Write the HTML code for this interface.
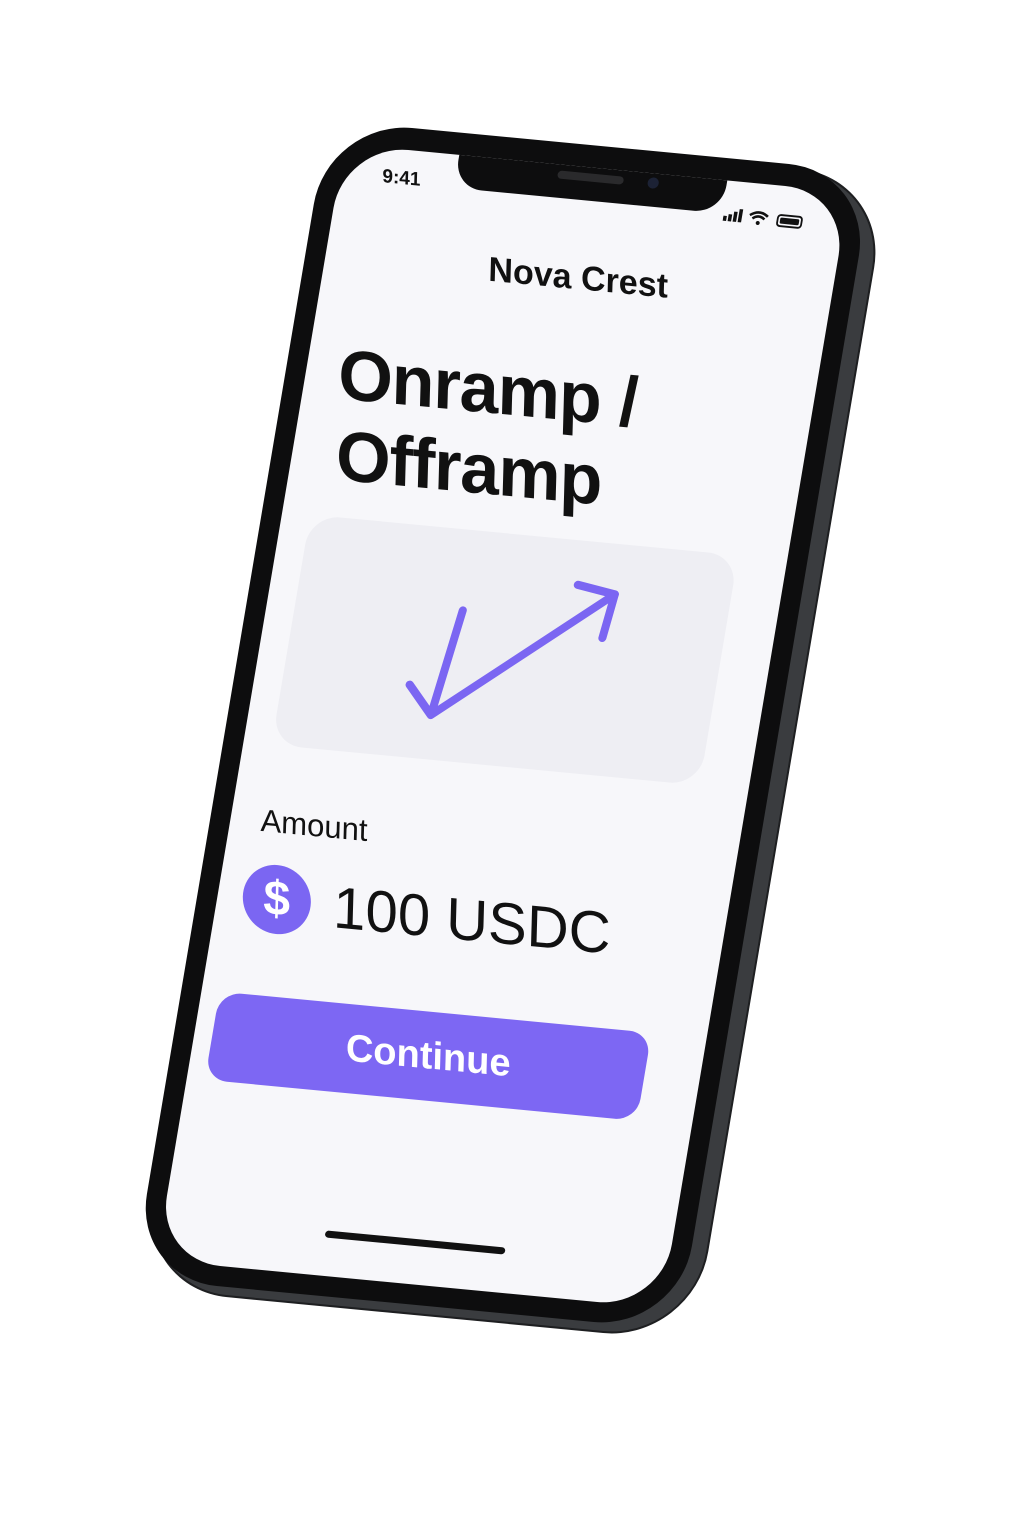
<!DOCTYPE html>
<html><head><meta charset="utf-8"><style>
html,body{margin:0;padding:0;background:#fff;width:1024px;height:1536px;overflow:hidden}
body{font-family:"Liberation Sans",sans-serif}
.ph{position:absolute;left:328px;top:120px;width:565px;height:1175px;transform-origin:0 0;transform:matrix(1,0.0954,-0.1686,1,0,0)}
.side{position:absolute;left:8px;top:6px;width:552px;height:1160px;border-radius:88px;background:#3a3c3f;box-shadow:0 0 0 2px #1e1f21}
.body{position:absolute;left:0;top:0;width:545px;height:1158px;border-radius:84px;background:#0d0d0e}
.scr{position:absolute;left:20px;top:22px;width:505px;height:1116px;border-radius:64px;background:#f7f7fa;overflow:hidden}
.notch{position:absolute;left:115px;top:-2px;width:268px;height:35px;background:#0d0d0e;border-radius:0 0 28px 28px}
.a{position:absolute;color:#111}
.u{transform:skewX(8deg)}
</style></head><body>
<div class="ph">
 <div class="side"></div>
 <div class="body">
  <div class="scr">
   <div class="notch"><div style="position:absolute;left:100px;top:8px;width:66px;height:8px;border-radius:4px;background:#2a2a2c"></div><div style="position:absolute;left:190px;top:6px;width:11px;height:11px;border-radius:50%;background:#1c2235"></div></div>
   <div class="a u" style="left:43px;top:18px;font-size:19px;font-weight:bold">9:41</div>
   <svg class="a" style="left:385px;top:24px" width="90" height="22" viewBox="0 0 90 22">
    <rect x="0" y="11" width="3.5" height="5" fill="#111"/><rect x="5" y="9" width="3.5" height="7" fill="#111"/><rect x="10" y="6" width="3.5" height="10" fill="#111"/><rect x="15" y="3" width="3.5" height="13" fill="#111"/>
    <path d="M26 8 Q35 1 44 8 M29 11 Q35 6 41 11" stroke="#111" stroke-width="2.5" fill="none"/><circle cx="35" cy="15" r="2" fill="#111"/>
    <rect x="54" y="5" width="24" height="11" rx="3" fill="none" stroke="#111" stroke-width="1.8"/><rect x="56.5" y="7.5" width="19" height="6" rx="1.5" fill="#111"/>
   </svg>
   <div class="a u" style="left:0;width:505px;text-align:center;top:90px;font-size:34px;font-weight:bold;line-height:40px">Nova Crest</div>
   <div class="a u" style="left:38px;top:187px;font-size:70px;font-weight:bold;line-height:80px;letter-spacing:-1px">Onramp /<br>Offramp</div>
   <div style="position:absolute;left:28px;top:368px;width:428px;height:230px;border-radius:30px;background:#eeeef3">
    <svg width="428" height="230" style="position:absolute;left:0;top:0"><g stroke="#7b66f2" stroke-width="8" fill="none" stroke-linecap="round" stroke-linejoin="round"><path d="M166 80 L152 186 L126 158 M152 186 L313 50"/><path d="M275 44 L313 50 L308 94"/></g></svg>
   </div>
   <div class="a u" style="left:30px;top:656px;font-size:31px;line-height:36px">Amount</div>
   <div class="u" style="position:absolute;left:25px;top:716px;width:68px;height:68px;border-radius:50%;background:#7b66f2;color:#fff;font-size:48px;font-weight:bold;text-align:center;line-height:68px">$</div>
   <div class="a u" style="left:116px;top:720px;font-size:58px;line-height:66px">100 USDC</div>
   <div style="position:absolute;left:18px;top:846px;width:432px;height:88px;border-radius:22px;background:#7d67f3;color:#fff;font-size:38px;font-weight:bold;text-align:center;line-height:88px"><div class="u">Continue</div></div>
   <div style="position:absolute;left:162px;top:1071px;width:180px;height:7px;border-radius:4px;background:#111"></div>
  </div>
 </div>
</div>
</body></html>
